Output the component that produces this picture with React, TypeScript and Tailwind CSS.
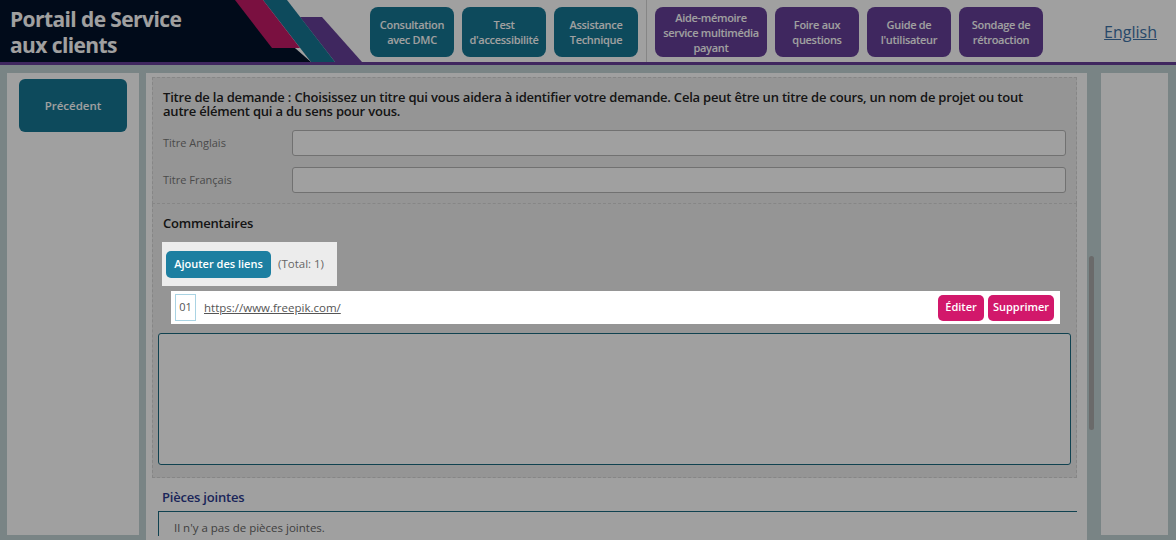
import React from 'react'

const tealBtn = 'flex h-[50px] w-[84px] items-center justify-center rounded-lg bg-[#157693] text-center text-[11px] font-semibold leading-[15px] tracking-[-0.3px] text-white'
const purpleBtn = 'flex h-[50px] w-[84px] items-center justify-center rounded-lg bg-[#653f98] text-center text-[11px] font-semibold leading-[15px] tracking-[-0.3px] text-white'

function Logo() {
  return (
    <div className="relative h-full w-[362px] shrink-0">
      <svg className="absolute inset-0" width="362" height="62" viewBox="0 0 362 62">
        <polygon points="0,0 240,0 311,62 0,62" fill="#03122a" />
        <polygon points="300,17 322,17 362,62 335,62" fill="#653f98" />
        <polygon points="263,0 287,0 335,62 311,62" fill="#157693" />
        <polygon points="235,0 263,0 300,48 272,48" fill="#c31a66" />
      </svg>
      <div className="relative pl-[10px] pt-[6px] text-[21px] font-bold leading-[26px] tracking-[-0.6px] text-white">
        Portail de Service
        <br />
        aux clients
      </div>
    </div>
  )
}

function Header() {
  return (
    <header className="flex h-[65px] items-start border-b-[3px] border-[#653f98] bg-white">
      <Logo />
      <div className="ml-2 flex h-full items-start gap-2 pt-[7px]">
        <button className={tealBtn}>
          Consultation
          <br />
          avec DMC
        </button>
        <button className={tealBtn}>
          Test
          <br />
          d'accessibilité
        </button>
        <button className={tealBtn}>
          Assistance
          <br />
          Technique
        </button>
      </div>
      <div className="mx-2 h-full w-px bg-[#d6d6d6]" />
      <div className="flex h-full items-start gap-2 pt-[7px]">
        <button className={purpleBtn + ' w-[112px]'}>
          Aide-mémoire
          <br />
          service multimédia
          <br />
          payant
        </button>
        <button className={purpleBtn}>
          Foire aux
          <br />
          questions
        </button>
        <button className={purpleBtn}>
          Guide de
          <br />
          l'utilisateur
        </button>
        <button className={purpleBtn}>
          Sondage de
          <br />
          rétroaction
        </button>
      </div>
      <a className="ml-auto mr-[19px] mt-[20px] text-[16px] text-[#3f73a8] underline">English</a>
    </header>
  )
}

function TitleSection() {
  return (
    <section className="border border-dashed border-[#d6d6d6] bg-[#eeeeee] px-[10px] pb-[10px] pt-[12px]">
      <p className="whitespace-nowrap text-[13px] font-semibold leading-[14px] tracking-[-0.2px] text-[#222]">
        Titre de la demande : Choisissez un titre qui vous aidera à identifier votre demande. Cela peut être un titre de cours, un nom de projet ou tout
        <br />
        autre élément qui a du sens pour vous.
      </p>
      <div className="mt-[12px] flex flex-col gap-[11px]">
        <div className="flex items-center">
          <label className="w-[129px] text-[11px] text-[#777]">Titre Anglais</label>
          <div className="h-[26px] w-[777px] rounded-[3px] border border-[#b4b4b4] bg-white" />
        </div>
        <div className="flex items-center">
          <label className="w-[129px] text-[11px] text-[#777]">Titre Français</label>
          <div className="h-[26px] w-[777px] rounded-[3px] border border-[#b4b4b4] bg-white" />
        </div>
      </div>
    </section>
  )
}

function CommentSection() {
  return (
    <section className="border border-t-0 border-dashed border-[#d6d6d6] bg-[#eeeeee] pb-[12px] pt-[10px]">
      <h3 className="pl-[10px] text-[13px] font-semibold leading-[18px] tracking-[-0.2px] text-[#222]">Commentaires</h3>
      <div className="relative z-20 ml-[9px] mt-[10px] flex h-[44px] w-[175px] items-center gap-[7px] bg-[#ececec] pl-[4px]">
        <button className="h-[27px] w-[105px] rounded-[5px] bg-[#1d7fa1] text-[11px] font-semibold text-white">
          Ajouter des liens
        </button>
        <span className="text-[11.5px] text-[#666]">(Total: 1)</span>
      </div>
      <div className="relative z-20 ml-[18px] mt-[5px] flex h-[33px] w-[889px] items-center bg-white pl-[4px] pr-[6px]">
        <span className="flex h-[27px] w-[21px] items-center justify-center border border-[#a9d3e3] text-[11px] text-[#555]">
          01
        </span>
        <a className="ml-[8px] text-[11.5px] text-[#555] underline">https://www.freepik.com/</a>
        <div className="ml-auto flex gap-[4px]">
          <button className="h-[26px] w-[46px] rounded-[5px] bg-[#d2186b] text-[11px] font-semibold text-white">Éditer</button>
          <button className="h-[26px] w-[66px] rounded-[5px] bg-[#d2186b] text-[11px] font-semibold text-white">Supprimer</button>
        </div>
      </div>
      <div className="mx-[5px] mt-[9px] h-[132px] rounded-[3px] border border-[#1b6a80] bg-white" />
    </section>
  )
}

export default function App() {
  return (
    <div className="relative h-[540px] w-[1176px] overflow-hidden bg-[#c1d2d4] font-['Open_Sans',sans-serif]">
      <Header />
      <div className="flex h-[475px] items-start pl-[7px] pt-[8px]">
        <aside className="mr-[7px] h-[462px] w-[132px] shrink-0 bg-white pt-[6px]">
          <button className="ml-[12px] h-[53px] w-[108px] rounded-md bg-[#157693] text-[11.5px] font-semibold text-white">
            Précédent
          </button>
        </aside>
        <main className="h-[467px] w-[941px] shrink-0 bg-white pl-[6px] pr-[10px] pt-[4px]">
          <TitleSection />
          <CommentSection />
          <h3 className="mt-[10px] pl-[10px] text-[13px] font-semibold leading-[18px] tracking-[-0.2px] text-[#2b3a8f]">Pièces jointes</h3>
          <div className="ml-[6px] mt-[5px] border-l-[1.5px] border-t-[1.5px] border-[#1b6a80] pl-[15px] pt-[7px] text-[11.5px] text-[#666]">
            Il n'y a pas de pièces jointes.
          </div>
        </main>
        <div className="w-[14px] shrink-0 pl-[2px] pt-[183px]">
          <div className="h-[174px] w-[5px] rounded-full bg-[#a9a9a9]" />
        </div>
        <aside className="h-[462px] w-[67px] shrink-0 bg-white" />
      </div>
      <div className="absolute inset-0 z-10 bg-black/[0.373]" />
    </div>
  )
}
